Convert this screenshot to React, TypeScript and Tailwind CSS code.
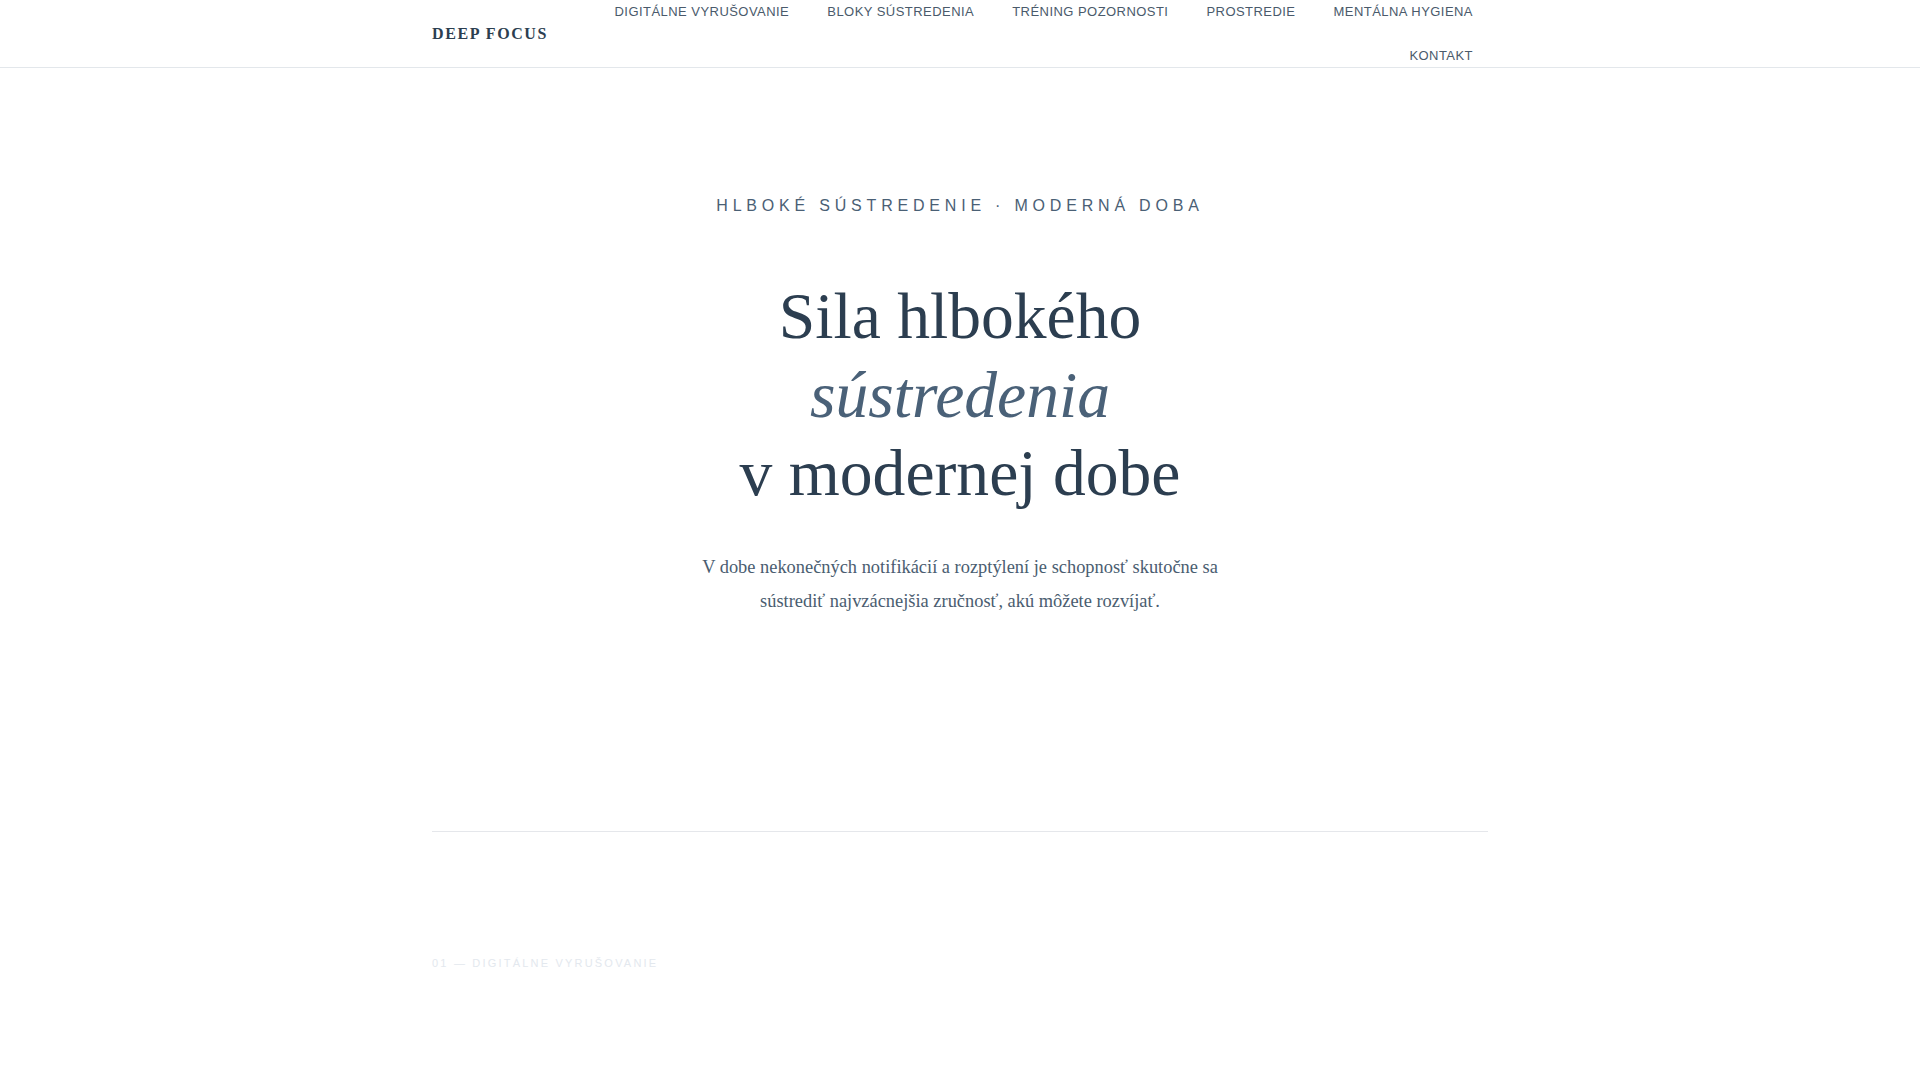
import React from "react";

const navItems = [
    "Digitálne vyrušovanie",
    "Bloky sústredenia",
    "Tréning pozornosti",
    "Prostredie",
    "Mentálna hygiena",
    "Kontakt",
];

const Header = () => {
    return (
        <header className="h-[68px] w-full border-b border-[#e3e7eb] bg-white">
            <div className="mx-auto flex h-full max-w-[1056px] items-center justify-between">
                <a className="font-['Liberation_Serif',serif] text-[16px] font-bold tracking-[0.1em] text-[#2c3e50]">
                    DEEP FOCUS
                </a>
                <nav className="w-[880px]">
                    <ul className="flex flex-wrap justify-end gap-x-[38px] gap-y-[22px] pr-[15px]">
                        {navItems.map((item) => (
                            <li key={item}>
                                <a className="block font-['Liberation_Sans',sans-serif] text-[13px] uppercase leading-[22px] tracking-[0.035em] text-[#4a5a6b]">
                                    {item}
                                </a>
                            </li>
                        ))}
                    </ul>
                </nav>
            </div>
        </header>
    );
};

const Hero = () => {
    return (
        <section className="mx-auto flex max-w-[1056px] flex-col items-center pt-[126px] pb-[213px] text-center">
            <p className="font-['Liberation_Sans',sans-serif] text-[16px] uppercase leading-[24px] tracking-[0.3em] text-[#4a6075]">
                Hlboké sústredenie · Moderná doba
            </p>
            <h1 className="mt-[59px] font-['Liberation_Serif',serif] text-[65.6px] font-normal leading-[1.2] text-[#2c3e50]">
                Sila hlbokého
                <br />
                <em className="italic text-[#4a6178]">sústredenia</em>
                <br />
                v modernej dobe
            </h1>
            <p className="mt-[37px] max-w-[560px] font-['Liberation_Serif',serif] text-[18.4px] leading-[34px] text-[#4a5d70]">
                V dobe nekonečných notifikácií a rozptýlení je schopnosť skutočne sa sústrediť
                najvzácnejšia zručnosť, akú môžete rozvíjať.
            </p>
        </section>
    );
};

export default function App() {
    return (
        <div className="min-h-screen bg-white">
            <Header />
            <main>
                <Hero />
                <section className="mx-auto max-w-[1056px] border-t border-[#e5e7eb] pt-[123px]">
                    <p className="font-['Liberation_Sans',sans-serif] text-[11px] uppercase leading-[16px] tracking-[0.2em] text-[#e3e8ee]">
                        01 — Digitálne vyrušovanie
                    </p>
                </section>
            </main>
        </div>
    );
}
